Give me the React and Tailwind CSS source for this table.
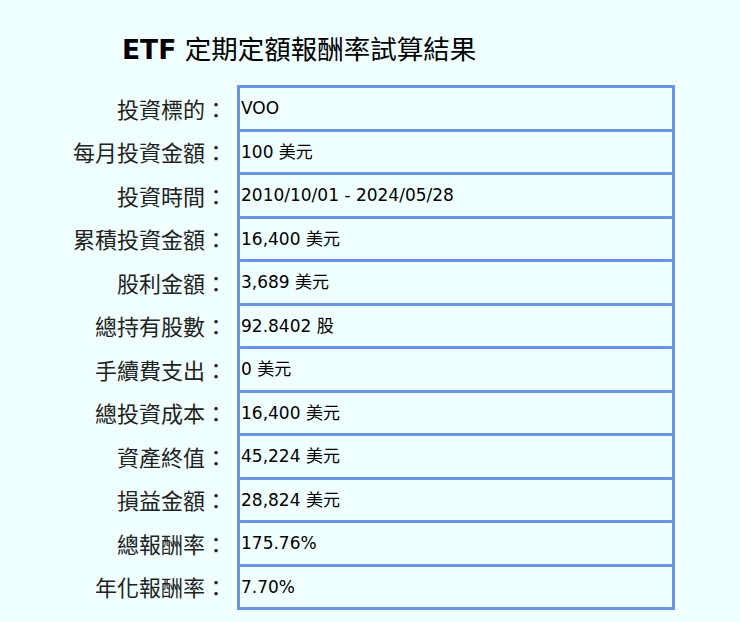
const rows = [
  { label: "投資標的：", value: "VOO" },
  { label: "每月投資金額：", value: "100 美元" },
  { label: "投資時間：", value: "2010/10/01 - 2024/05/28" },
  { label: "累積投資金額：", value: "16,400 美元" },
  { label: "股利金額：", value: "3,689 美元" },
  { label: "總持有股數：", value: "92.8402 股" },
  { label: "手續費支出：", value: "0 美元" },
  { label: "總投資成本：", value: "16,400 美元" },
  { label: "資產終值：", value: "45,224 美元" },
  { label: "損益金額：", value: "28,824 美元" },
  { label: "總報酬率：", value: "175.76%" },
  { label: "年化報酬率：", value: "7.70%" },
];

const App = () => {
  return (
    <div className="min-h-screen w-full bg-[#f0ffff] pt-[30px] font-['DejaVu_Sans','Noto_Sans_CJK_TC',sans-serif] text-black">
      <h1 className="ml-[122px] h-[36px] text-[26.5px] leading-[36px] whitespace-nowrap">
        <span className="font-bold">ETF</span>{" "}
        <span className="font-['Noto_Sans_CJK_TC',sans-serif]">定期定額報酬率試算結果</span>
      </h1>
      <div className="mt-[19px] flex flex-col">
        {rows.map((row, i) => (
          <div className="flex" key={row.label}>
            <div
              className={
                "w-[237px] shrink-0 flex items-center justify-end pr-[10px] pb-[3px] text-[22px] text-[#222] font-['Noto_Sans_CJK_TC',sans-serif] " +
                (i === 0 ? "pt-[3px]" : "")
              }
            >
              {row.label}
            </div>
            <div
              className={
                "w-[438px] shrink-0 h-[43.5px] flex items-center pl-[1px] pt-[1px] border-x-[3px] border-b-[3px] border-[#6a93e8] text-[17px] " +
                (i === 0 ? "border-t-[3px] h-[46.5px]" : "")
              }
            >
              {row.value}
            </div>
          </div>
        ))}
      </div>
    </div>
  );
};

export default App;
